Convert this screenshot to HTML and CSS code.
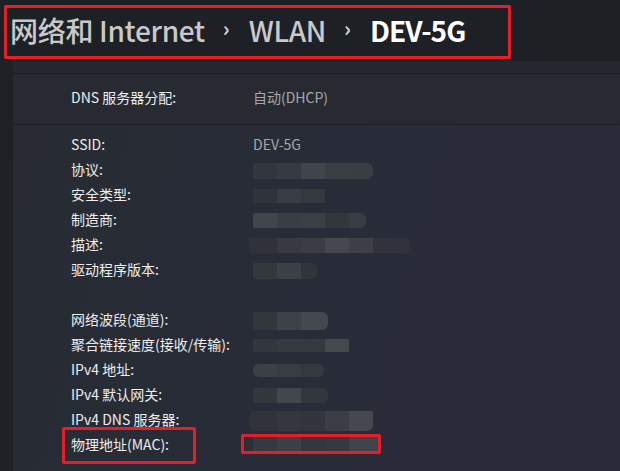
FILE: index.html
```html
<!DOCTYPE html>
<html lang="zh-CN">
<head>
<meta charset="utf-8">
<link rel="stylesheet" href="styles.css">
</head>
<body>
<header class="top">
  <div class="crumb">
    <span class="c-dim">网络和 Internet</span>
    <span class="chev">›</span>
    <span class="c-dim">WLAN</span>
    <span class="chev">›</span>
    <span class="c-cur">DEV-5G</span>
  </div>
</header>
<div class="main">
  <div class="rail"></div>
  <div class="panel">
    <div class="strip"></div>
    <div class="card dns">
      <div class="row"><span class="lbl">DNS 服务器分配:</span><span class="val">自动(DHCP)</span></div>
    </div>
    <div class="details">
      <div class="group">
        <div class="row"><span class="lbl">SSID:</span><span class="val">DEV-5G</span></div>
        <div class="row"><span class="lbl">协议:</span><span class="blur b1"></span></div>
        <div class="row"><span class="lbl">安全类型:</span><span class="blur b2"></span></div>
        <div class="row"><span class="lbl">制造商:</span><span class="blur b3"></span></div>
        <div class="row"><span class="lbl">描述:</span><span class="blur b4"></span></div>
        <div class="row"><span class="lbl">驱动程序版本:</span><span class="blur b5"></span></div>
      </div>
      <div class="group">
        <div class="row"><span class="lbl">网络波段(通道):</span><span class="blur b6"></span></div>
        <div class="row"><span class="lbl">聚合链接速度(接收/传输):</span><span class="blur b7"></span></div>
        <div class="row"><span class="lbl">IPv4 地址:</span><span class="blur b8"></span></div>
        <div class="row"><span class="lbl">IPv4 默认网关:</span><span class="blur b9"></span></div>
        <div class="row"><span class="lbl">IPv4 DNS 服务器:</span><span class="blur b10"></span></div>
        <div class="row"><span class="lbl mark">物理地址(MAC):</span><span class="blur b11 markv"></span></div>
      </div>
    </div>
  </div>
</div>
</body>
</html>
```

FILE: styles.css
```css
* { box-sizing: border-box; }
html, body { margin: 0; padding: 0; }
body {
  width: 620px;
  height: 471px;
  overflow: hidden;
  background: #1d2126;
  font-family: "Noto Sans", "Noto Sans CJK SC", sans-serif;
  color: #ececec;
}
.top {
  height: 61px;
  padding: 5px 0 0 4px;
}
.crumb {
  width: 507px;
  height: 54px;
  border: 3px solid #e51e27;
  border-radius: 2px;
  display: flex;
  align-items: center;
  padding-left: 3px;
  padding-bottom: 5px;
  font-family: "Noto Sans CJK SC", sans-serif;
  font-size: 28px;
  font-weight: 500;
  line-height: 1;
}
.c-dim { color: #c9c9c9; letter-spacing: -0.3px; }
.c-cur { color: #ffffff; font-weight: 700; letter-spacing: -0.9px; }
.chev {
  color: #d4d4d4;
  font-size: 21px;
  font-weight: 700;
  margin: 0 19px 0 18px;
  transform: translateY(-1px);
}
.main {
  display: flex;
  height: 410px;
}
.rail {
  width: 13px;
  background: #1e2226;
}
.panel {
  flex: 1;
  display: flex;
  flex-direction: column;
}
.strip {
  flex-shrink: 0;
  height: 13px;
  background: #24282e;
  border-bottom: 1px solid #1a1d21;
}
.card.dns {
  flex-shrink: 0;
  height: 51px;
  background: #272b31;
  border-bottom: 1px solid #1a1d21;
  padding-top: 10px;
}
.details {
  flex: 1 0 auto;
  background: linear-gradient(105deg, #272b31 0%, #282c38 45%, #2b2a3b 100%);
  padding-top: 6px;
}
.group { margin-bottom: 25px; }
.group:last-child { margin-bottom: 0; }
.row {
  display: flex;
  align-items: center;
  height: 25px;
  padding-left: 58px;
  font-family: "Noto Sans CJK SC", sans-serif;
  font-size: 14px;
}
.lbl {
  width: 182px;
  color: #ededed;
  position: relative;
}
.val { color: #a7a7a7; }
.blur {
  display: inline-block;
  height: 15px;
  border-radius: 2px 6px 6px 2px;
  transform: translateY(2px);
}
.b1 { width: 120px; height: 16px; background: linear-gradient(90deg, #33363d 0 24px, #373a41 24px 48px, #41444b 48px 72px, #3b3e45 72px 96px, #3a3d44 96px); }
.b2 { width: 72px; height: 14px; background: linear-gradient(90deg, #30333a 0 24px, #393c43 24px 48px, #35383f 48px); border-radius: 1px; }
.b3 { width: 113px; background: linear-gradient(90deg, #42454c 0 24px, #3a3d44 24px 48px, #3c3f46 48px 72px, #33363d 72px 96px, #393c43 96px); }
.b4 { width: 161px; margin-left: -4px; background: linear-gradient(90deg, #2f3239 0 28px, #373a41 28px 52px, #3a3d44 52px 76px, #44474e 76px 100px, #3d4047 100px 124px, #30333c 124px); }
.b5 { width: 64px; height: 16px; background: linear-gradient(90deg, #34373e 0 24px, #3d4047 24px 48px, #31343b 48px); }
.b6 { width: 75px; height: 18px; background: linear-gradient(90deg, #33363d 0 24px, #3e4148 24px 48px, #44474e 48px); }
.b7 { width: 96px; height: 13px; background: linear-gradient(90deg, #33363d 0 24px, #363940 24px 48px, #35383f 48px 72px, #46494f 72px); border-radius: 1px; }
.b8 { width: 71px; height: 13px; background: linear-gradient(90deg, #3d4047 0 24px, #393c43 24px 48px, #35383f 48px); border-radius: 6px; }
.b9 { width: 75px; height: 15px; background: linear-gradient(90deg, #33363d 0 24px, #43464d 24px 48px, #33363d 48px); }
.b10 { width: 124px; height: 20px; margin-left: -4px; background: linear-gradient(90deg, #30333a 0 28px, #34373e 28px 52px, #32353c 52px 76px, #3b3e45 76px 100px, #45484f 100px); border-radius: 6px 2px 6px 8px; }
.b11 { width: 133px; height: 14px; margin-left: -8px; background: linear-gradient(90deg, #2c2f36 0 8px, #363940 8px 32px, #3d4047 32px 56px, #34373e 56px 80px, #36393f 80px 104px, #40434a 104px); border-radius: 0; transform: none; }
.mark::after {
  content: "";
  position: absolute;
  left: -9px;
  top: -7px;
  width: 128px;
  height: 31px;
  border: 3px solid #e51e27;
  border-radius: 2px;
}
.markv { position: relative; }
.markv::after {
  content: "";
  position: absolute;
  left: -4px;
  top: -3px;
  right: -3px;
  bottom: -3px;
  border: 3px solid #e51e27;
  border-radius: 2px;
}
```
